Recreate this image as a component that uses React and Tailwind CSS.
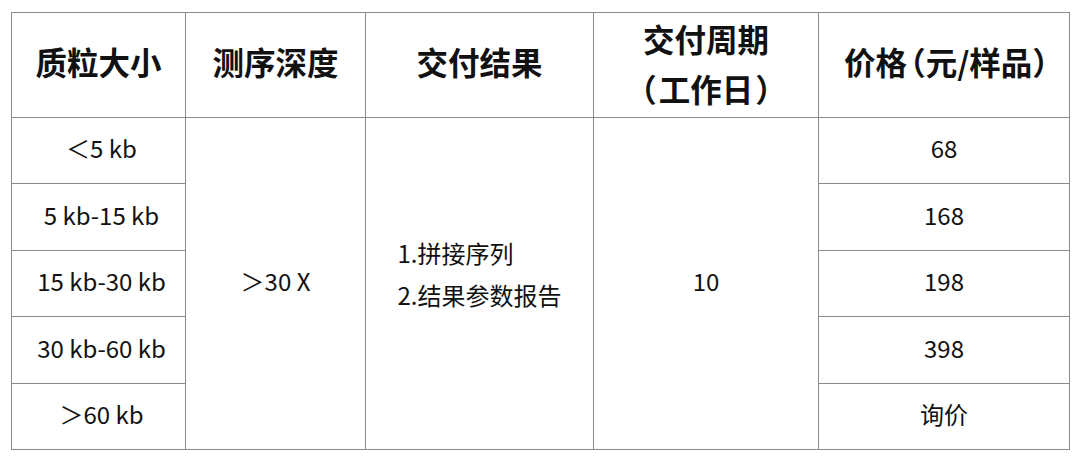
import React from 'react';

const rows = [
  { size: '＜5 kb', price: '68' },
  { size: '5 kb-15 kb', price: '168' },
  { size: '15 kb-30 kb', price: '198' },
  { size: '30 kb-60 kb', price: '398' },
  { size: '＞60 kb', price: '询价' },
];

const rowHeights = ['h-[66px]', 'h-[67px]', 'h-[66px]', 'h-[67px]', 'h-[66px]'];

export default function App() {
  const cell = 'border border-[#8a8a8a] text-center align-middle p-0';
  return (
    <div
      className="w-[1080px] h-[473px] bg-white pt-[12px] pl-[11px] text-[#111]"
      style={{ fontFamily: '"Noto Sans CJK SC", "Noto Sans", sans-serif' }}
    >
      <table className="table-fixed border-collapse w-[1058px]">
        <colgroup>
          <col className="w-[174px]" />
          <col className="w-[180px]" />
          <col className="w-[228px]" />
          <col className="w-[225px]" />
          <col className="w-[251px]" />
        </colgroup>
        <thead>
          <tr className="h-[105px] text-[31.5px] font-bold leading-[45px] [font-feature-settings:'halt']">
            <th className={`${cell} pb-[7px]`}>质粒大小</th>
            <th className={`${cell} pb-[7px]`}>测序深度</th>
            <th className={`${cell} pb-[7px]`}>交付结果</th>
            <th className={`${cell} pb-[4px] leading-[50px]`}>
              交付周期
              <br />
              （<span className="mx-[2px]">工作日</span>）
            </th>
            <th className={`${cell} pb-[7px] pl-[4px]`}>
              价格<span className="ml-[3px]">（</span>元/样品）
            </th>
          </tr>
        </thead>
        <tbody className="text-[24px] leading-[30px]">
          {rows.map((r, i) => (
            <tr key={i} className={rowHeights[i]}>
              <td className={`${cell} pb-[5px] pl-[6px]`}>{r.size}</td>
              {i === 0 && (
                <>
                  <td rowSpan={5} className={`${cell} pb-[6px]`}>＞30 X</td>
                  <td rowSpan={5} className={`${cell} pb-[20px]`}>
                    <div className="inline-block text-left leading-[42px]">
                      <div>1.拼接序列</div>
                      <div>2.结果参数报告</div>
                    </div>
                  </td>
                  <td rowSpan={5} className={`${cell} pb-[6px]`}>10</td>
                </>
              )}
              <td className={`${cell} pb-[5px]`}>{r.price}</td>
            </tr>
          ))}
        </tbody>
      </table>
    </div>
  );
}
